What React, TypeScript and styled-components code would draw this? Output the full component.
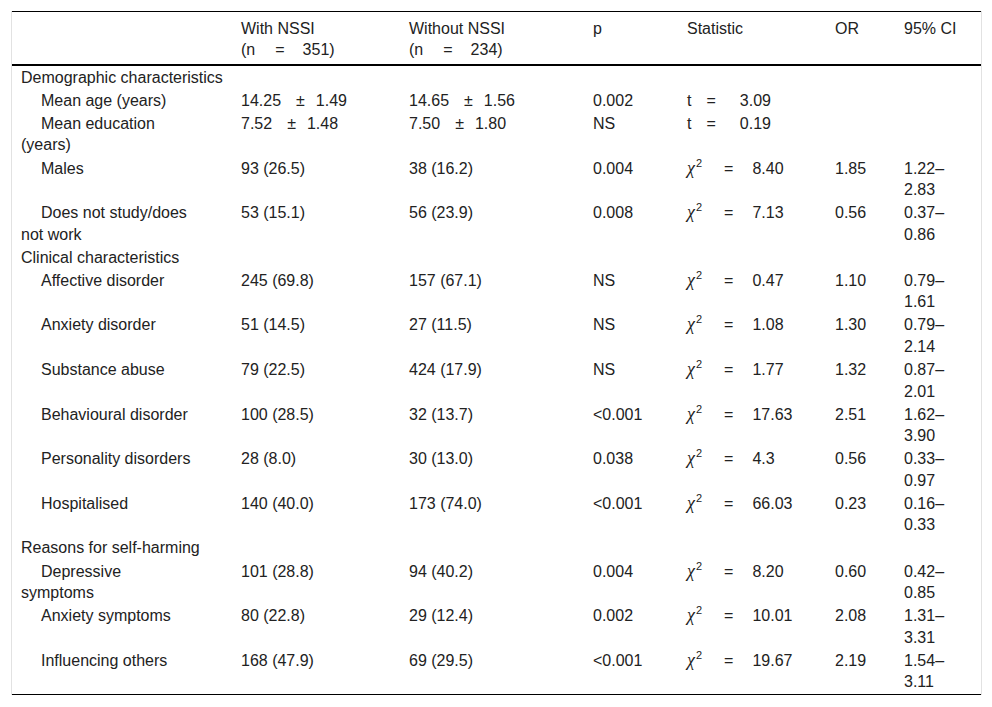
import React from 'react';
import styled, { createGlobalStyle } from 'styled-components';

const GlobalStyle = createGlobalStyle`
  body {
    margin: 0;
    background: #ffffff;
    font-family: 'Liberation Sans', Arial, sans-serif;
  }
`;

const Frame = styled.div`
  margin: 11px 0 0 11px;
  width: 969px;
  border-left: 1px solid #e2e2e2;
  border-right: 1px solid #e2e2e2;
`;

const Table = styled.table`
  width: 100%;
  table-layout: fixed;
  border-collapse: separate;
  border-spacing: 0;
  font-size: 16px;
  line-height: 21.5px;
  color: #222222;

  tbody tr:last-child td {
    border-bottom: 1px solid #000000;
  }
`;

const Col = styled.col<{ $w: number }>`
  width: ${(p) => p.$w}px;
`;

const HeadCell = styled.th`
  text-align: left;
  font-weight: normal;
  vertical-align: top;
  padding: 5.5px 10px 3.5px 9px;
  border-top: 1px solid #000000;
  border-bottom: 2px solid #000000;
`;

const Cell = styled.td`
  vertical-align: top;
  padding: 0.8px 10px 0.8px 9px;
`;

const Label = styled(Cell)`
  padding-right: 37px;
  text-indent: 20px;
`;

const Stat = styled(Cell)`
  white-space: nowrap;
`;

const Op = styled.span<{ $before: number; $after: number }>`
  margin-left: ${(p) => p.$before}px;
  margin-right: ${(p) => p.$after}px;
`;

const Chi = styled.span`
  font-family: 'Liberation Serif', 'DejaVu Serif', serif;
  font-style: italic;
  font-size: 18px;
`;

const Sup = styled.span`
  position: relative;
  top: -7px;
  font-size: 11px;
  margin-left: 1px;
`;

type Row = {
  label: string;
  a: string;
  b: string;
  p: string;
  stat?: { kind: 't' | 'chi'; value: string };
  or?: string;
  ci?: string;
};

type Section = { title: string; rows: Row[] };

const sections: Section[] = [
  {
    title: 'Demographic characteristics',
    rows: [
      { label: 'Mean age (years)', a: '14.25 ± 1.49', b: '14.65 ± 1.56', p: '0.002', stat: { kind: 't', value: '3.09' } },
      { label: 'Mean education (years)', a: '7.52 ± 1.48', b: '7.50 ± 1.80', p: 'NS', stat: { kind: 't', value: '0.19' } },
      { label: 'Males', a: '93 (26.5)', b: '38 (16.2)', p: '0.004', stat: { kind: 'chi', value: '8.40' }, or: '1.85', ci: '1.22–2.83' },
      { label: 'Does not study/does not work', a: '53 (15.1)', b: '56 (23.9)', p: '0.008', stat: { kind: 'chi', value: '7.13' }, or: '0.56', ci: '0.37–0.86' },
    ],
  },
  {
    title: 'Clinical characteristics',
    rows: [
      { label: 'Affective disorder', a: '245 (69.8)', b: '157 (67.1)', p: 'NS', stat: { kind: 'chi', value: '0.47' }, or: '1.10', ci: '0.79–1.61' },
      { label: 'Anxiety disorder', a: '51 (14.5)', b: '27 (11.5)', p: 'NS', stat: { kind: 'chi', value: '1.08' }, or: '1.30', ci: '0.79–2.14' },
      { label: 'Substance abuse', a: '79 (22.5)', b: '424 (17.9)', p: 'NS', stat: { kind: 'chi', value: '1.77' }, or: '1.32', ci: '0.87–2.01' },
      { label: 'Behavioural disorder', a: '100 (28.5)', b: '32 (13.7)', p: '<0.001', stat: { kind: 'chi', value: '17.63' }, or: '2.51', ci: '1.62–3.90' },
      { label: 'Personality disorders', a: '28 (8.0)', b: '30 (13.0)', p: '0.038', stat: { kind: 'chi', value: '4.3' }, or: '0.56', ci: '0.33–0.97' },
      { label: 'Hospitalised', a: '140 (40.0)', b: '173 (74.0)', p: '<0.001', stat: { kind: 'chi', value: '66.03' }, or: '0.23', ci: '0.16–0.33' },
    ],
  },
  {
    title: 'Reasons for self-harming',
    rows: [
      { label: 'Depressive symptoms', a: '101 (28.8)', b: '94 (40.2)', p: '0.004', stat: { kind: 'chi', value: '8.20' }, or: '0.60', ci: '0.42–0.85' },
      { label: 'Anxiety symptoms', a: '80 (22.8)', b: '29 (12.4)', p: '0.002', stat: { kind: 'chi', value: '10.01' }, or: '2.08', ci: '1.31–3.31' },
      { label: 'Influencing others', a: '168 (47.9)', b: '69 (29.5)', p: '<0.001', stat: { kind: 'chi', value: '19.67' }, or: '2.19', ci: '1.54–3.11' },
    ],
  },
];

// "14.25 ± 1.49" gets the wide spacing of the original; plain counts stay as they are
function Value({ text }: { text: string }) {
  const parts = text.split(' ± ');
  if (parts.length < 2) return <>{text}</>;
  return (
    <>
      {parts[0]}
      <Op $before={15} $after={11}>±</Op>
      {parts[1]}
    </>
  );
}

function Statistic({ stat }: { stat: Row['stat'] }) {
  if (!stat) return null;
  if (stat.kind === 't') {
    return (
      <>
        t<Op $before={15} $after={24}>=</Op>
        {stat.value}
      </>
    );
  }
  return (
    <>
      <Chi>χ</Chi>
      <Sup>2</Sup>
      <Op $before={22} $after={19}>=</Op>
      {stat.value}
    </>
  );
}

function GroupHead({ n }: { n: string }) {
  return (
    <>
      (n<Op $before={20} $after={18}>=</Op>
      {n})
    </>
  );
}

export default function App() {
  return (
    <>
      <GlobalStyle />
      <Frame>
        <Table>
          <colgroup>
            <Col $w={220} />
            <Col $w={168} />
            <Col $w={184} />
            <Col $w={94} />
            <Col $w={148} />
            <Col $w={69} />
            <Col $w={86} />
          </colgroup>
          <thead>
            <tr>
              <HeadCell />
              <HeadCell>
                With NSSI
                <br />
                <GroupHead n="351" />
              </HeadCell>
              <HeadCell>
                Without NSSI
                <br />
                <GroupHead n="234" />
              </HeadCell>
              <HeadCell>p</HeadCell>
              <HeadCell>Statistic</HeadCell>
              <HeadCell>OR</HeadCell>
              <HeadCell>95% CI</HeadCell>
            </tr>
          </thead>
          <tbody>
            {sections.map((section) => (
              <React.Fragment key={section.title}>
                <tr>
                  <Cell colSpan={7}>{section.title}</Cell>
                </tr>
                {section.rows.map((row) => (
                  <tr key={row.label}>
                    <Label>{row.label}</Label>
                    <Cell>
                      <Value text={row.a} />
                    </Cell>
                    <Cell>
                      <Value text={row.b} />
                    </Cell>
                    <Cell>{row.p}</Cell>
                    <Stat>
                      <Statistic stat={row.stat} />
                    </Stat>
                    <Cell>{row.or}</Cell>
                    <Cell>{row.ci}</Cell>
                  </tr>
                ))}
              </React.Fragment>
            ))}
          </tbody>
        </Table>
      </Frame>
    </>
  );
}
